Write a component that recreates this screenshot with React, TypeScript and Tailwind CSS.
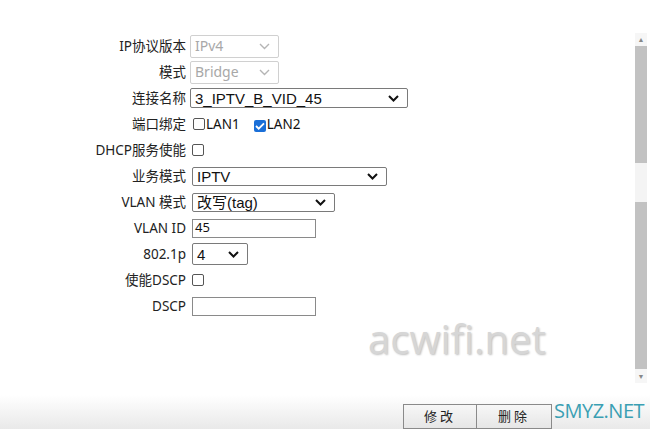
import React from "react";

const cjk = { fontFamily: '"Noto Sans", "Noto Sans CJK SC", sans-serif' };
const arial = { fontFamily: '"Liberation Sans", "Noto Sans CJK SC", sans-serif' };

function Chevron({ light }: { light?: boolean }) {
  return (
    <svg width="11" height="7" viewBox="0 0 11 7" className="shrink-0">
      <path
        d="M1 1l4.5 4.5L10 1"
        fill="none"
        stroke={light ? "#b5b5b5" : "#111"}
        strokeWidth={light ? 1.4 : 2}
      />
    </svg>
  );
}

function Select({
  value,
  width,
  height,
  disabled,
  size = 15,
}: {
  value: string;
  width: number;
  height: number;
  disabled?: boolean;
  size?: number;
}) {
  return (
    <div
      className={`flex items-center justify-between rounded-[2px] border bg-white pl-[4px] pr-[8px] ${
        disabled ? "border-[#d0d0d0] text-[#a8a8a8]" : "border-[#7a7a7a] text-[#111]"
      }`}
      style={{ width, height, fontSize: size, ...(disabled ? cjk : arial) }}
    >
      <span className="leading-none">{value}</span>
      <Chevron light={disabled} />
    </div>
  );
}

function Check({ checked }: { checked?: boolean }) {
  if (checked) {
    return (
      <span className="inline-flex h-[12px] w-[12px] items-center justify-center rounded-[2px] bg-[#1a6fd8]">
        <svg width="10" height="8" viewBox="0 0 10 8">
          <path d="M1 4l2.7 2.7L9 1.3" fill="none" stroke="#fff" strokeWidth="1.8" />
        </svg>
      </span>
    );
  }
  return <span className="inline-block h-[12px] w-[12px] rounded-[2px] border border-[#555] bg-white" />;
}

function Input({ value, width, height }: { value?: string; width: number; height: number }) {
  return (
    <div
      className="flex items-center border border-[#8a8a8a] bg-white pl-[2px] text-[13px] text-[#111]"
      style={{ width, height, ...cjk }}
    >
      {value}
    </div>
  );
}

function Row({ label, children, gap = 4 }: { label: string; children: React.ReactNode; gap?: number }) {
  return (
    <div className="flex h-[26px] items-center">
      <div className="w-[186px] shrink-0 text-right text-[13.5px] text-[#222]" style={cjk}>
        {label}
      </div>
      <div className="flex items-center" style={{ marginLeft: gap }}>
        {children}
      </div>
    </div>
  );
}

export default function App() {
  return (
    <div className="relative flex h-[429px] w-[650px] flex-col overflow-hidden bg-white">
      <div className="flex h-[395px]">
        <div className="flex-1 pt-[33px]">
          <Row label="IP协议版本">
            <Select value="IPv4" width={89} height={23} disabled size={14} />
          </Row>
          <Row label="模式">
            <Select value="Bridge" width={89} height={23} disabled size={14} />
          </Row>
          <Row label="连接名称">
            <Select value="3_IPTV_B_VID_45" width={218} height={20} />
          </Row>
          <Row label="端口绑定" gap={7}>
            <Check />
            <span className="ml-px text-[13.5px] text-[#111]" style={cjk}>LAN1</span>
            <span className="ml-[14px]">
              <Check checked />
            </span>
            <span className="ml-px text-[13.5px] text-[#111]" style={cjk}>LAN2</span>
          </Row>
          <Row label="DHCP服务使能" gap={6}>
            <Check />
          </Row>
          <Row label="业务模式" gap={6}>
            <Select value="IPTV" width={195} height={19} />
          </Row>
          <Row label="VLAN 模式" gap={6}>
            <Select value="改写(tag)" width={143} height={19} />
          </Row>
          <Row label="VLAN ID" gap={6}>
            <Input value="45" width={124} height={19} />
          </Row>
          <Row label="802.1p" gap={6}>
            <Select value="4" width={56} height={22} />
          </Row>
          <Row label="使能DSCP" gap={6}>
            <Check />
          </Row>
          <Row label="DSCP" gap={6}>
            <Input width={124} height={19} />
          </Row>
        </div>

        {/* scrollbar */}
        <div className="mr-[3px] mt-[33px] flex h-[350px] w-[12px] flex-col bg-[#f6f6f6]">
          <div className="flex h-[13px] items-center justify-center">
            <span className="text-[7px] leading-none text-[#888]">▲</span>
          </div>
          <div className="h-[117px] bg-[#c2c2c2]" />
          <div className="h-[39px] bg-[#f4f4f4]" />
          <div className="h-[167px] bg-[#c2c2c2]" />
          <div className="flex h-[14px] items-center justify-center">
            <span className="text-[7px] leading-none text-[#888]">▼</span>
          </div>
        </div>
      </div>

      {/* bottom bar */}
      <div className="flex h-[34px] items-end bg-gradient-to-b from-white to-[#e9e9e9] pl-[403px]">
        <button
          className="h-[25px] w-[74px] border border-[#8a8a8a] bg-gradient-to-b from-[#f7f7f7] to-[#e6e6e6] text-[13px] tracking-[3px] text-[#222]"
          style={cjk}
        >
          修改
        </button>
        <button
          className="h-[25px] w-[75px] border border-l-0 border-[#8a8a8a] bg-gradient-to-b from-[#f7f7f7] to-[#e6e6e6] text-[13px] tracking-[3px] text-[#222]"
          style={cjk}
        >
          删除
        </button>
        <span
          className="mb-[8px] ml-[2px] text-[20px] leading-none tracking-[-0.5px] text-[#3a9fb3]"
          style={{ fontFamily: '"Open Sans", sans-serif' }}
        >
          SMYZ.NET
        </span>
      </div>

      {/* watermark */}
      <div
        className="absolute left-[368px] top-[319px] text-[40px] leading-none text-[#d6d6d6]"
        style={{ fontFamily: '"Open Sans", sans-serif', textShadow: "1px 1px 2px #c0c0c0" }}
      >
        acwifi.net
      </div>
    </div>
  );
}
